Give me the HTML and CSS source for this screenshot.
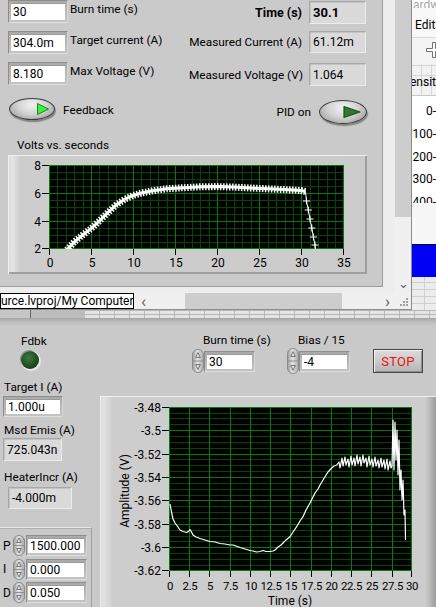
FILE: index.html
```html
<!DOCTYPE html>
<html>
<head>
<meta charset="utf-8">
<link rel="stylesheet" href="styles.css">
</head>
<body>
<svg class="defs" width="0" height="0">
  <defs>
    <linearGradient id="spin" x1="0" y1="0" x2="1" y2="0">
      <stop offset="0" stop-color="#9a9a9a"/>
      <stop offset="0.45" stop-color="#e6e6e6"/>
      <stop offset="1" stop-color="#a8a8a8"/>
    </linearGradient>
  </defs>
</svg>
<div class="desktop">
  <div class="toprow">
    <div class="topwin">
      <div class="panel">
        <div class="tp-top">
          <div class="col-left">
            <div class="ctl-row"><div class="num"><div class="val">30</div></div><span class="lbl">Burn time (s)</span></div>
            <div class="ctl-row"><div class="num"><div class="val">304.0m</div></div><span class="lbl">Target current (A)</span></div>
            <div class="ctl-row"><div class="num"><div class="val">8.180</div></div><span class="lbl">Max Voltage (V)</span></div>
          </div>
          <div class="col-right">
            <div class="ind-row r1"><span class="lbl bold">Time (s)</span><div class="ind bold"><span>30.1</span></div></div>
            <div class="ind-row r2"><span class="lbl">Measured Current (A)</span><div class="ind"><span>61.12m</span></div></div>
            <div class="ind-row r3"><span class="lbl">Measured Voltage (V)</span><div class="ind"><span>1.064</span></div></div>
          </div>
        </div>
        <div class="tg-row">
          <div class="tg-left">
            <div class="toggle t-fb"><svg width="14" height="14" viewBox="0 0 14 14"><path d="M1.5 1.5 L12.5 7 L1.5 12.5 Z" fill="#3ef03e" stroke="#1d8a1d" stroke-width="1" stroke-linejoin="round"/></svg></div>
            <span class="lbl fb-lbl">Feedback</span>
          </div>
          <div class="tg-right">
            <span class="lbl">PID on</span>
            <div class="toggle t-pid"><svg width="20" height="14" viewBox="0 0 20 14"><path d="M2 1.5 L18 7 L2 12.5 Z" fill="#2f7a2f" stroke="#1e4e1e" stroke-width="1.2" stroke-linejoin="round"/></svg></div>
          </div>
        </div>
        <div class="glabel">Volts vs. seconds</div>
        <div class="gframe top-g">
          <svg class="plot" width="359" height="119" viewBox="8 155 359 119">
            <rect x="49" y="165" width="295" height="84" fill="#000"/>
            <g shape-rendering="crispEdges" fill="none">
              <path stroke="#004a00" d="M49 172.5H344M49 179.5H344M49 186.5H344M49 200.5H344M49 207.5H344M49 214.5H344M49 228.5H344M49 235.5H344M49 242.5H344"/>
              <path stroke="#004a00" d="M57.5 165V249M66.5 165V249M74.5 165V249M83.5 165V249M99.5 165V249M108.5 165V249M116.5 165V249M125.5 165V249M141.5 165V249M150.5 165V249M158.5 165V249M167.5 165V249M184.5 165V249M192.5 165V249M200.5 165V249M209.5 165V249M226.5 165V249M234.5 165V249M242.5 165V249M251.5 165V249M268.5 165V249M276.5 165V249M285.5 165V249M293.5 165V249M310.5 165V249M318.5 165V249M327.5 165V249M335.5 165V249"/>
              <path stroke="#008000" d="M49 165.5H344M49 193.5H344M49 221.5H344M49 248.5H344M49.5 165V249M91.5 165V249M133.5 165V249M175.5 165V249M217.5 165V249M259.5 165V249M301.5 165V249M343.5 165V249"/>
              <path stroke="#000" d="M42 165.5H49M42 193.5H49M42 221.5H49M42 248.5H49M49.5 249V255M91.5 249V255M133.5 249V255M175.5 249V255M217.5 249V255M259.5 249V255M301.5 249V255M343.5 249V255"/>
            </g>
            <g class="ax" text-anchor="end">
              <text x="41" y="169.5">8</text>
              <text x="41" y="197.5">6</text>
              <text x="41" y="225.5">4</text>
              <text x="41" y="253">2</text>
            </g>
            <g class="ax" text-anchor="middle">
              <text x="50" y="267">0</text>
              <text x="92" y="267">5</text>
              <text x="134" y="267">10</text>
              <text x="176" y="267">15</text>
              <text x="218" y="267">20</text>
              <text x="260" y="267">25</text>
              <text x="302" y="267">30</text>
              <text x="344" y="267">35</text>
            </g>
            <clipPath id="tclip"><rect x="49" y="165" width="295" height="84"/></clipPath>
            <g clip-path="url(#tclip)" fill="none" stroke="#fff">
              <polyline stroke-width="3" points="67,250 74.2,242 82.6,235 91,228.7 99.4,221 107.8,212.6 116.2,204.9 124.6,199.3 133,195.5 141.4,193 149.8,191.3 158.2,189.9 166.6,188.8 183.4,187.7 200.2,186.8 217,186.6 233.8,187.1 250.6,188 267.4,188.8 284.2,189.6 301,190.5 305.5,191.5"/>
              <polyline stroke-width="7" stroke-dasharray="1.5 1.5" points="67,250 74.2,242 82.6,235 91,228.7 99.4,221 107.8,212.6 116.2,204.9 124.6,199.3 133,195.5 141.4,193 149.8,191.3 158.2,189.9 166.6,188.8 183.4,187.7 200.2,186.8 217,186.6 233.8,187.1 250.6,188 267.4,188.8 284.2,189.6 301,190.5 305.5,191.5"/>
              <polyline stroke-width="1" points="305.5,191.5 306.5,201 308.3,210 310,219 311.8,228 313.4,237 315,245 316,252"/>
              <path stroke-width="1" d="M303 201H310M306.5 197.5V204.5M304.8 210H311.8M308.3 206.5V213.5M306.5 219H313.5M310 215.5V222.5M308.3 228H315.3M311.8 224.5V231.5M309.9 237H316.9M313.4 233.5V240.5M311.5 245H318.5M315 241.5V248.5"/>
            </g>
          </svg>
        </div>
      </div>
      <div class="vscroll"><div class="vthumb"></div><div class="vtrack"><span class="arr-d">&#8964;</span></div></div>
      <div class="hscroll">
        <div class="path">urce.lvproj/My Computer</div>
        <span class="arr-l">&lsaquo;</span>
        <div class="hthumb"></div>
        <span class="arr-r">&rsaquo;</span>
      </div>
      <div class="grip"><svg width="16" height="16" viewBox="0 0 16 16"><g fill="#a0a0a0"><rect x="11" y="5" width="2" height="2"/><rect x="8" y="8" width="2" height="2"/><rect x="11" y="8" width="2" height="2"/><rect x="5" y="11" width="2" height="2"/><rect x="8" y="11" width="2" height="2"/><rect x="11" y="11" width="2" height="2"/></g></svg></div>
    </div>
    <div class="bgwin">
      <div class="bw-title">ardw</div>
      <div class="bw-menu">Edit</div>
      <div class="bw-tool"><svg width="24" height="24" viewBox="0 0 24 24"><path d="M10 2 H14 V10 H22 V14 H14 V22 H10 V14 H2 V10 H10 Z" fill="#fff" stroke="#444" stroke-width="1"/></svg></div>
      <div class="bw-hdr">ensity</div>
      <div class="bw-axis">
        <div>0-</div><div>100-</div><div>200-</div><div>300-</div><div class="cut">400-</div>
      </div>
      <div class="bw-white"></div>
      <div class="bw-blue"></div>
      <div class="bw-grid"></div>
    </div>
  </div>
  <div class="strip">
    <div class="st-a"></div>
    <div class="st-b"></div>
    <div class="st-c"></div>
  </div>
  <div class="bottom">
    <div class="bl">
      <div class="lbl fdbk">Fdbk</div>
      <div class="led"></div>
      <div class="lbl b-tl">Target I (A)</div>
      <div class="num b-tv"><div class="val">1.000u</div></div>
      <div class="lbl b-ml">Msd Emis (A)</div>
      <div class="ind b-mv"><span>725.043n</span></div>
      <div class="lbl b-hl">HeaterIncr (A)</div>
      <div class="ind b-hv"><span>-4.000m</span></div>
      <div class="cluster">
        <div class="pid-row"><span class="pl">P</span><svg class="spin" width="12" height="21" viewBox="0 0 12 21"><rect x="0.5" y="0.5" width="11" height="20" rx="5.5" fill="url(#spin)" stroke="#8a8a8a"/><path d="M1 10.5H11" stroke="#909090"/><path d="M6 3 L8.3 7.5 H3.7 Z M6 18 L8.3 13.5 H3.7 Z" fill="none" stroke="#606060" stroke-width="0.8"/></svg><div class="num pnum"><div class="val">1500.000</div></div></div>
        <div class="pid-row"><span class="pl">I</span><svg class="spin" width="12" height="21" viewBox="0 0 12 21"><rect x="0.5" y="0.5" width="11" height="20" rx="5.5" fill="url(#spin)" stroke="#8a8a8a"/><path d="M1 10.5H11" stroke="#909090"/><path d="M6 3 L8.3 7.5 H3.7 Z M6 18 L8.3 13.5 H3.7 Z" fill="none" stroke="#606060" stroke-width="0.8"/></svg><div class="num pnum"><div class="val">0.000</div></div></div>
        <div class="pid-row"><span class="pl">D</span><svg class="spin" width="12" height="21" viewBox="0 0 12 21"><rect x="0.5" y="0.5" width="11" height="20" rx="5.5" fill="url(#spin)" stroke="#8a8a8a"/><path d="M1 10.5H11" stroke="#909090"/><path d="M6 3 L8.3 7.5 H3.7 Z M6 18 L8.3 13.5 H3.7 Z" fill="none" stroke="#606060" stroke-width="0.8"/></svg><div class="num pnum"><div class="val">0.050</div></div></div>
      </div>
    </div>
    <div class="br">
      <div class="br-top">
        <div class="grp g-burn">
          <span class="lbl glbl">Burn time (s)</span>
          <div class="sp-row"><svg class="spin" width="12" height="24" viewBox="0 0 12 24"><rect x="0.5" y="0.5" width="11" height="23" rx="5.5" fill="url(#spin)" stroke="#8a8a8a"/><path d="M1 12H11" stroke="#909090"/><path d="M6 3.5 L8.3 8.5 H3.7 Z M6 20.5 L8.3 15.5 H3.7 Z" fill="none" stroke="#606060" stroke-width="0.8"/></svg><div class="num snum"><div class="val">30</div></div></div>
        </div>
        <div class="grp g-bias">
          <span class="lbl glbl">Bias / 15</span>
          <div class="sp-row"><svg class="spin" width="12" height="26" viewBox="0 0 12 26"><rect x="0.5" y="0.5" width="11" height="25" rx="5.5" fill="url(#spin)" stroke="#8a8a8a"/><path d="M1 13H11" stroke="#909090"/><path d="M6 3.5 L8.3 8.5 H3.7 Z M6 22.5 L8.3 17.5 H3.7 Z" fill="none" stroke="#606060" stroke-width="0.8"/></svg><div class="num snum"><div class="val">-4</div></div></div>
        </div>
        <div class="stop"><span>STOP</span></div>
      </div>
      <div class="gframe bot-g">
        <svg class="plot" width="336" height="211" viewBox="100 396 336 211">
          <rect x="169" y="407" width="243" height="164" fill="#000"/>
          <g shape-rendering="crispEdges" fill="none">
            <path stroke="#004a00" d="M169 413.5H412M169 418.5H412M169 424.5H412M169 436.5H412M169 442.5H412M169 448.5H412M169 459.5H412M169 465.5H412M169 471.5H412M169 483.5H412M169 489.5H412M169 495.5H412M169 506.5H412M169 512.5H412M169 518.5H412M169 530.5H412M169 536.5H412M169 541.5H412M169 553.5H412M169 559.5H412M169 565.5H412"/>
            <path stroke="#008000" d="M169 407.5H412M169 430.5H412M169 454.5H412M169 477.5H412M169 500.5H412M169 524.5H412M169 547.5H412M169 570.5H412M169.5 407V571M189.5 407V571M209.5 407V571M230.5 407V571M250.5 407V571M270.5 407V571M290.5 407V571M311.5 407V571M331.5 407V571M351.5 407V571M371.5 407V571M392.5 407V571M411.5 407V571"/>
            <path stroke="#000" d="M162 407.5H169M162 430.5H169M162 454.5H169M162 477.5H169M162 500.5H169M162 524.5H169M162 547.5H169M162 570.5H169M169.5 571V577M189.5 571V577M209.5 571V577M230.5 571V577M250.5 571V577M270.5 571V577M290.5 571V577M311.5 571V577M331.5 571V577M351.5 571V577M371.5 571V577M392.5 571V577M411.5 571V577"/>
          </g>
          <g class="ax" text-anchor="end">
            <text x="161" y="411.5">-3.48</text>
            <text x="161" y="434.5">-3.5</text>
            <text x="161" y="458.5">-3.52</text>
            <text x="161" y="481.5">-3.54</text>
            <text x="161" y="504.5">-3.56</text>
            <text x="161" y="528.5">-3.58</text>
            <text x="161" y="551.5">-3.6</text>
            <text x="161" y="574.5">-3.62</text>
          </g>
          <g class="ax axx" text-anchor="middle">
            <text x="170" y="589.5">0</text>
            <text x="190" y="589.5">2.5</text>
            <text x="210" y="589.5">5</text>
            <text x="230.5" y="589.5">7.5</text>
            <text x="251" y="589.5">10</text>
            <text x="271" y="589.5">12.5</text>
            <text x="291" y="589.5">15</text>
            <text x="311.5" y="589.5">17.5</text>
            <text x="331.5" y="589.5">20</text>
            <text x="351.5" y="589.5">22.5</text>
            <text x="372" y="589.5">25</text>
            <text x="392.5" y="589.5">27.5</text>
            <text x="412" y="589.5">30</text>
          </g>
          <text class="ax" x="290" y="605" text-anchor="middle">Time (s)</text>
          <text class="ax" x="0" y="0" text-anchor="middle" transform="translate(129 491) rotate(-90)">Amplitude (V)</text>
          <polyline fill="none" stroke="#fff" stroke-width="1.2" stroke-linejoin="round" points="170,504 171.7,513 173,519 175,523 178,527 180,530 183,531.5 186.7,532.5 189,531 190,529.5 191.5,532 193,535 196,537 200,538.5 205,540 210,541.5 215,542 220,543.5 225,544 230,545 233,545 236,546 240,547.5 245,549 250,550.5 253,551 256.7,552 260,551.5 263,550.5 266,551.5 270,551.5 273,551 275,550 278,547 281,545 283,543 286,540 290,536.7 293,532 296.7,526.7 300,521 303,516.7 306,510 310,503 313,497 315,493 318,489 320,485 323,480 325,476.7 328,472 331.7,468 334,466 336.7,465 339,462 340,468 342,458 343,466 345,457 346,465 348,459 349,467 351,456 352,465 354,458 355,466 357,455 358,464 360,457 361,466 363,455 364,463 366,458 367,467 369,456 370,465 372,459 373,467 375,457 376,466 378,460 379,468 381,458 382,467 384,460 385,469 387,459 388,470 390,461 391,468 392,466 393,420 394,470 395,422 396,460 397,430 398,475 399,440 400,490 401,470 402,500 403,480 404,515 405,510 405.5,540"/>
        </svg>
      </div>
    </div>
  </div>
</div>
</body>
</html>
```

FILE: styles.css
```css
* { box-sizing: border-box; }
html, body { margin: 0; padding: 0; }
body {
  width: 436px; height: 607px; overflow: hidden;
  font-family: Roboto, "Liberation Sans", sans-serif;
  font-size: 11.8px; color: #000; background: #c9c9c9;
}
.defs { position: absolute; width: 0; height: 0; }
.desktop { width: 436px; height: 607px; display: flex; flex-direction: column; }
.toprow { display: flex; height: 310px; flex: none; }

/* top LabVIEW window */
.topwin {
  width: 412px; height: 310px; flex: none;
  display: grid;
  grid-template-columns: 383px 12px 16px;
  grid-template-rows: 287px 6px 16px;
  background: #ededed;
  border-right: 1px solid #8c8c8c;
  border-bottom: 1px solid #8c8c8c;
}
.panel {
  grid-area: 1 / 1 / 2 / 2;
  background: #cacaca;
  border-right: 1px solid #9d9d9d;
  border-bottom: 1px solid #9d9d9d;
  display: flex; flex-direction: column;
}
.lbl { white-space: nowrap; line-height: 14px; }
.bold { font-weight: bold; font-size: 12.5px; }

.tp-top { display: flex; height: 90px; flex: none; }
.col-left { margin-left: 8px; display: flex; flex-direction: column; gap: 8px; }
.ctl-row { display: flex; align-items: flex-start; height: 23px; }
.ctl-row .lbl { margin-left: 2px; margin-top: 2px; }

.num {
  background: linear-gradient(#a9a9a9, #c4c4c4);
  border: 1px solid; border-color: #8e8e8e #d6d6d6 #dedede #8e8e8e;
  padding: 2px;
  display: flex;
}
.num .val {
  flex: 1; background: #fff; padding-left: 2px;
  display: flex; align-items: center; font-size: 12px;
  border-top: 1px solid #9a9a9a;
}
.ctl-row .num { width: 60px; height: 23px; }

.col-right { margin-left: auto; margin-right: 16px; display: flex; flex-direction: column; align-items: flex-end; }
.ind-row { display: flex; align-items: center; gap: 6px; }
.ind-row .ind { width: 57px; }
.r1 { margin-top: 1px; }
.r1 .ind { height: 23px; }
.r1 .lbl { margin-right: 1px; }
.r2 { margin-top: 7px; }
.r2 .ind { height: 22px; }
.r2 .lbl { margin-right: 1px; }
.r3 { margin-top: 10px; }
.r3 .ind { height: 23px; }

.ind {
  background: #dadada;
  border: 1px solid; border-color: #a7a7a7 #ececec #ececec #a7a7a7;
  box-shadow: inset 1px 1px 0 #c4c4c4;
  display: flex; align-items: center; padding-left: 3px;
  font-size: 12px;
}
.ind.bold { font-size: 13px; }

.tg-row { display: flex; margin-top: 8px; height: 27px; flex: none; }
.tg-left { display: flex; align-items: center; height: 22px; margin-left: 9px; }
.fb-lbl { margin-left: 8px; margin-top: 1px; }
.tg-right { margin-left: auto; margin-right: 15px; display: flex; align-items: center; height: 27px; }
.tg-right .lbl { margin-right: 8px; }
.toggle {
  border-radius: 50%;
  border: 1px solid #3c3c3c;
  background: radial-gradient(ellipse at 50% 30%, #f2f2f2 0%, #d4d4d4 45%, #a2a2a2 85%, #8a8a8a 100%);
  box-shadow: 1px 2px 1px rgba(0,0,0,0.35);
  display: flex; align-items: center; justify-content: flex-end;
}
.t-fb { width: 46px; height: 22px; padding-right: 4px; }
.t-pid { width: 48px; height: 24px; padding-right: 4px; }
.toggle svg { display: block; }

.glabel { margin-left: 17px; margin-top: 13px; line-height: 14px; height: 14px; }
.gframe {
  background: #cbcbcb;
  box-shadow: inset 1px 1px 0 #efefef, inset -2px -2px 0 #9e9e9e;
}
.top-g {
  margin-left: 8px; margin-top: 3px; width: 359px; height: 119px;
  background: linear-gradient(90deg, #d8d8d8 0px, #e6e6e6 4px, #cdcdcd 12px, #cbcbcb 100%);
}
.plot { display: block; }
.ax { font-family: Roboto, "Liberation Sans", sans-serif; font-size: 12px; fill: #000; }
.axx { font-size: 11.4px; letter-spacing: -0.3px; }

.vscroll { grid-area: 1 / 3 / 3 / 4; background: #f0f0f0; display: flex; flex-direction: column; }
.vthumb { height: 217px; background: #cdcdcd; flex: none; }
.vtrack { flex: 1; display: flex; align-items: flex-end; justify-content: center; }
.arr-d { color: #606060; font-size: 13px; line-height: 10px; margin-bottom: 4px; }
.hscroll { grid-area: 3 / 1 / 4 / 3; background: #f0f0f0; display: flex; align-items: center; }
.path {
  width: 134px; height: 16px; border: 1px solid #000; background: #fff;
  font-size: 12px; line-height: 14px; white-space: nowrap; overflow: hidden; flex: none;
}
.arr-l { margin-left: 7px; font-size: 17px; color: #606060; line-height: 14px; width: 44px; }
.hthumb { width: 157px; height: 16px; background: #cdcdcd; }
.arr-r { margin-left: 43px; font-size: 17px; color: #606060; line-height: 14px; }
.grip { grid-area: 3 / 3 / 4 / 4; background: #f0f0f0; }
.grip svg { display: block; }

/* background window */
.bgwin { flex: 1; background: #fff; overflow: hidden; display: flex; flex-direction: column; font-size: 12px; }
.bw-title { height: 8px; overflow: hidden; color: #a8a8a8; line-height: 10px; text-indent: 1px; flex: none; }
.bw-menu { height: 30px; flex: none; background: #f8f8f8; padding-left: 3px; padding-top: 10px; line-height: 14px; border-bottom: 1px solid #dadada; }
.bw-tool { height: 26px; flex: none; background: #f4f4f4; padding-left: 13px; padding-top: 3px; }
.bw-tool svg { display: block; width: 18px; height: 18px; }
.bw-hdr {
  height: 32px; flex: none; line-height: 14px; padding-top: 11px; white-space: nowrap; text-indent: -2px;
  background-color: #f2f2f2;
  background-image: repeating-linear-gradient(90deg, transparent 0 9px, #d6d6d6 9px 10px),
                    repeating-linear-gradient(0deg, transparent 0 9px, #d6d6d6 9px 10px);
  border-bottom: 1px solid #c8c8c8;
}
.bw-axis { height: 107px; flex: none; padding-top: 8px; display: flex; flex-direction: column; align-items: flex-end; overflow: hidden; }
.bw-axis div { height: 22.8px; line-height: 14px; flex: none; }
.bw-white { height: 41px; flex: none; background: #f7f7f7; }
.bw-blue { height: 33px; flex: none; background: #0000f2; border-top: 1px solid #000050; }
.bw-grid {
  flex: 1; background-color: #ececec;
  background-image: repeating-linear-gradient(90deg, transparent 0 12px, #d0d0d0 12px 13px),
                    repeating-linear-gradient(0deg, transparent 0 6px, #d0d0d0 6px 7px);
}

/* strip of window behind */
.strip { height: 8px; display: flex; flex: none; background: #c2c2c2; }
.st-a { width: 30px; background: #c6c6c6; }
.st-b { width: 55px; background: #bcbcbc; border-left: 1px solid #666; }
.st-c {
  flex: 1; background-color: #e4e4e4;
  background-image: repeating-linear-gradient(90deg, transparent 0 14px, #b8b8b8 14px 15px),
                    repeating-linear-gradient(0deg, transparent 0 3px, #b8b8b8 3px 4px);
}

/* bottom panel */
.bottom { flex: 1; display: flex; background: linear-gradient(#a6a6a6 0px, #bdbdbd 4px, #c9c9c9 8px); overflow: hidden; }
.bl { width: 100px; flex: none; display: flex; flex-direction: column; }
.fdbk { margin-left: 21px; margin-top: 16px; }
.led {
  width: 18px; height: 18px; border-radius: 50%; margin-left: 21px; margin-top: 3px;
  background: radial-gradient(circle at 42% 38%, #3e7a3e 0%, #1f4f1f 55%, #0e2a0e 100%);
  box-shadow: 1px 1px 0 1px #e8e8e8, -1px -1px 0 0 #8a8a8a;
}
.b-tl { margin-left: 4px; margin-top: 11px; }
.b-tv { width: 60px; height: 21px; margin-left: 3px; margin-top: 2px; }
.b-ml { margin-left: 4px; margin-top: 6px; }
.b-mv { width: 59px; height: 23px; margin-left: 3px; margin-top: 1px; }
.b-hl { margin-left: 4px; margin-top: 9px; }
.b-hv { width: 64px; height: 22px; margin-left: 8px; margin-top: 3px; }
.cluster {
  margin-top: 18px; width: 92px; flex: 1;
  border-top: 1px solid #e6e6e6; border-right: 1px solid #a0a0a0;
  box-shadow: inset 0 1px 0 #b0b0b0;
  padding-top: 7px; display: flex; flex-direction: column; gap: 2.5px;
}
.pid-row { display: flex; align-items: center; height: 21px; }
.pl { width: 13px; padding-left: 3px; font-size: 12px; }
.spin { display: block; flex: none; }
.pnum { width: 61px; height: 21px; margin-left: 1px; padding: 2px 2px 2px 1px; }

.br { flex: 1; display: flex; flex-direction: column; }
.br-top { height: 78px; flex: none; display: flex; align-items: flex-start; padding-top: 15px; padding-left: 92px; }
.grp { display: flex; flex-direction: column; }
.glbl { margin-left: 11px; }
.sp-row { display: flex; align-items: center; margin-top: 1px; height: 26px; }
.g-burn { width: 63px; }
.g-bias { width: 64px; margin-left: 32px; }
.snum { width: 51px; height: 21px; }
.stop {
  margin-left: 22px; margin-top: 16px; width: 50px; height: 24px;
  border: 1px solid #4a4a4a;
  background: linear-gradient(#dcdcdc, #c6c6c6 60%, #b4b4b4);
  box-shadow: inset 1px 1px 0 #f2f2f2, inset -1px -1px 0 #8c8c8c;
  display: flex; align-items: center; justify-content: center;
  color: #f01010; font-size: 13px; letter-spacing: 0.3px;
}
.bot-g {
  flex: 1;
  background: linear-gradient(90deg, #d8d8d8 0px, #e2e2e2 4px, #cdcdcd 13px, #cdcdcd 325px, #bdbdbd 329px, #9c9c9c 336px);
  box-shadow: inset 1px 1px 0 #efefef;
}
```
